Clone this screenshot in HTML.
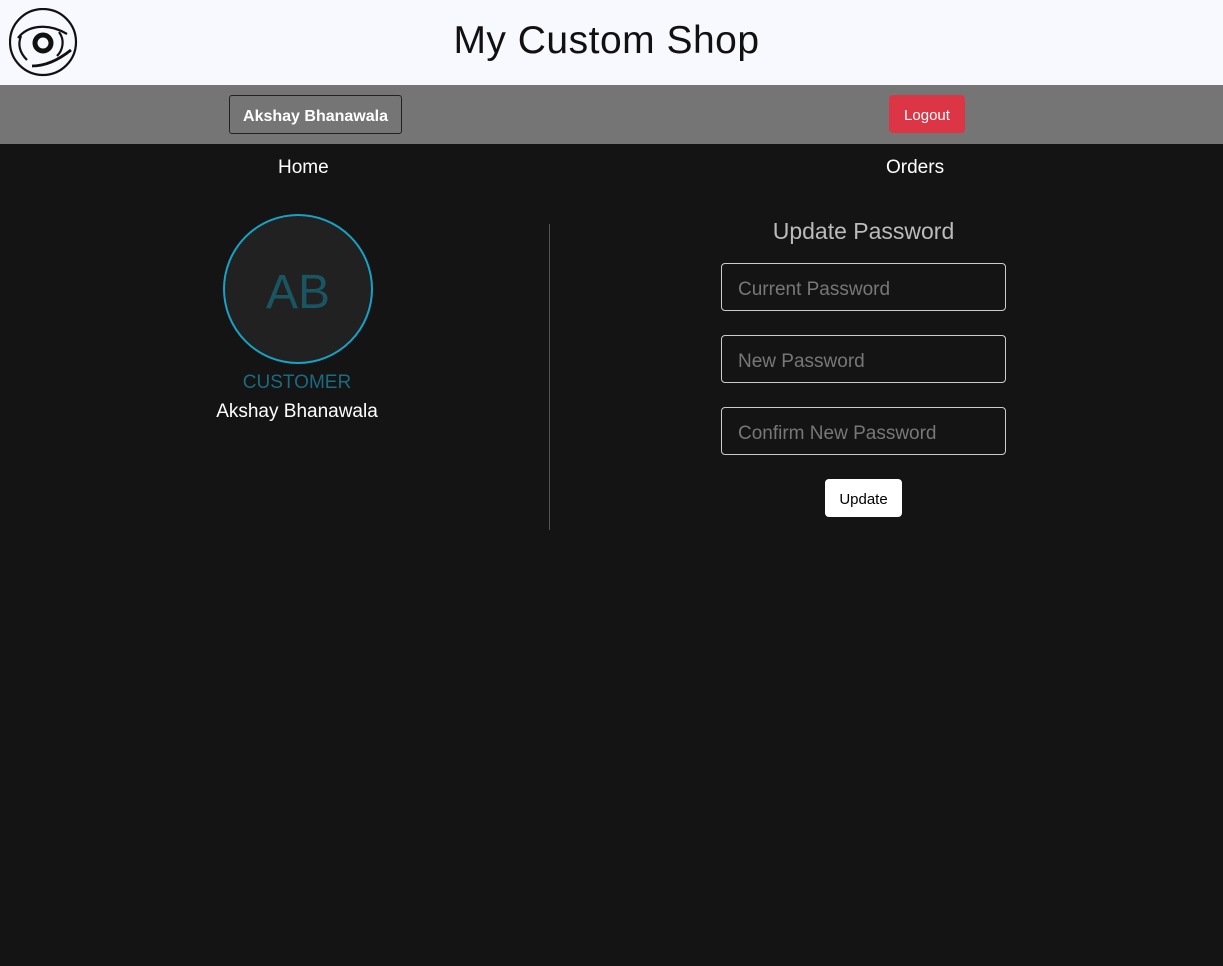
<!DOCTYPE html>
<html><head><style>
body{margin:0;width:1223px;height:966px;background:#141414;font-family:"Liberation Sans",sans-serif;position:relative;overflow:hidden}
.hdr{position:absolute;left:0;top:0;width:1223px;height:85px;background:#f8f9fe}
.title{position:absolute;left:0;width:1213px;top:19px;text-align:center;font-size:39px;color:#111;letter-spacing:0.5px}
.bar{position:absolute;top:85px;left:0;width:1223px;height:59px;background:#757575}
.name{position:absolute;left:229px;top:95px;width:171px;height:37px;border:1px solid #222;border-radius:3px;color:#fff;font-weight:bold;font-size:16px;line-height:41px;text-align:center;box-sizing:content-box}
.logout{position:absolute;left:889px;top:95px;width:76px;height:38px;background:#dc3545;border-radius:4px;color:#fff;font-size:15px;line-height:42px;text-align:center}
.nav{position:absolute;top:157px;color:#fff;font-size:19px}
.av{position:absolute;left:223px;top:214px;width:146px;height:146px;border:2px solid #17a2c4;border-radius:50%;background:#212121;color:#1a5662;font-size:48px;text-align:center;line-height:154px}
.cust{position:absolute;left:197px;width:200px;top:372px;text-align:center;color:#1a6a80;font-size:19px}
.un{position:absolute;left:197px;width:200px;top:401px;text-align:center;color:#fff;font-size:19px}
.div{position:absolute;left:549px;top:224px;width:1px;height:306px;background:#555}
.up{position:absolute;left:721px;width:285px;top:218px;text-align:center;color:#bbb;font-size:23px}
.in{position:absolute;left:721px;border:1px solid #ccc;border-radius:4px;color:#777;font-size:19px;line-height:51px;padding-left:16px;box-sizing:border-box;width:285px;height:48px}
.btn{position:absolute;left:825px;top:479px;width:77px;height:38px;background:#fff;border-radius:4px;font-size:15px;line-height:41px;text-align:center;color:#000}
</style></head><body>
<div class="hdr">
<svg style="position:absolute;left:9px;top:8px" width="70" height="70" viewBox="0 0 70 70" fill="none" stroke="#111" stroke-width="2.2">
<circle cx="34" cy="34" r="33"/>
<path d="M9 30 C18 18 38 14 58 26"/>
<path d="M12 28 C8 38 12 46 18 52"/>
<path d="M50 24 C56 32 54 42 48 48"/>
<path d="M23 58 C38 58 52 50 62 42" stroke-width="2.8"/>
<circle cx="34" cy="35" r="8" stroke-width="5"/>
</svg>
<div class="title">My Custom Shop</div>
</div>
<div class="bar"></div>
<div class="name">Akshay Bhanawala</div>
<div class="logout">Logout</div>
<div class="nav" style="left:278px">Home</div>
<div class="nav" style="left:886px">Orders</div>
<div class="av">AB</div>
<div class="cust">CUSTOMER</div>
<div class="un">Akshay Bhanawala</div>
<div class="div"></div>
<div class="up">Update Password</div>
<div class="in" style="top:263px">Current Password</div>
<div class="in" style="top:335px">New Password</div>
<div class="in" style="top:407px">Confirm New Password</div>
<div class="btn">Update</div>
</body></html>
